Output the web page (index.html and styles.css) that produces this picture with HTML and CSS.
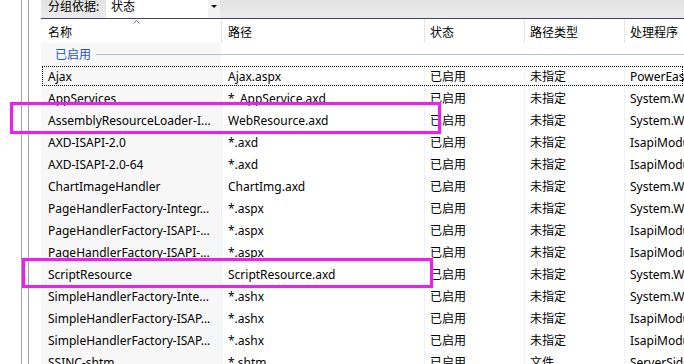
FILE: index.html
```html
<!DOCTYPE html>
<html lang="zh-CN">
<head>
    <meta charset="UTF-8">
    <title>处理程序映射</title>
    <link rel="stylesheet" href="styles.css">
</head>
<body>
    <div class="page">
        <div class="gutter">
            <div class="gutter-line"></div>
            <div class="gutter-line"></div>
        </div>

        <div class="panel">
            <!-- 分组工具栏 -->
            <div class="toolbar">
                <span class="toolbar-label">分组依据:</span>
                <div class="combo">
                    <span class="combo-text">状态</span>
                    <span class="combo-btn"><span class="combo-arrow"></span></span>
                </div>
            </div>

            <!-- 列表头 -->
            <div class="row head">
                <div class="cell name">
                    <svg class="sort" width="7" height="4" viewBox="0 0 7 4"><path d="M0.5 3.5 L3.5 0.5 L6.5 3.5" fill="none" stroke="#7a7a7a" stroke-width="1"/></svg>
                    <span>名称</span>
                </div>
                <div class="cell">路径</div>
                <div class="cell">状态</div>
                <div class="cell">路径类型</div>
                <div class="cell">处理程序</div>
            </div>

            <!-- 分组 -->
            <div class="row group">
                <div class="group-title">已启用</div>
                <div class="group-line"></div>
            </div>

            <div class="rows">
                <div class="row item focused">
                    <div class="cell name">Ajax</div>
                    <div class="cell">Ajax.aspx</div>
                    <div class="cell">已启用</div>
                    <div class="cell">未指定</div>
                    <div class="cell">PowerEasy.Framework</div>
                </div>
                <div class="row item">
                    <div class="cell name">AppServices</div>
                    <div class="cell">*_AppService.axd</div>
                    <div class="cell">已启用</div>
                    <div class="cell">未指定</div>
                    <div class="cell">System.Web</div>
                </div>
                <div class="row item">
                    <div class="cell name">AssemblyResourceLoader-I...</div>
                    <div class="cell">WebResource.axd</div>
                    <div class="cell">已启用</div>
                    <div class="cell">未指定</div>
                    <div class="cell">System.Web</div>
                </div>
                <div class="row item">
                    <div class="cell name">AXD-ISAPI-2.0</div>
                    <div class="cell">*.axd</div>
                    <div class="cell">已启用</div>
                    <div class="cell">未指定</div>
                    <div class="cell">IsapiModule</div>
                </div>
                <div class="row item">
                    <div class="cell name">AXD-ISAPI-2.0-64</div>
                    <div class="cell">*.axd</div>
                    <div class="cell">已启用</div>
                    <div class="cell">未指定</div>
                    <div class="cell">IsapiModule</div>
                </div>
                <div class="row item">
                    <div class="cell name">ChartImageHandler</div>
                    <div class="cell">ChartImg.axd</div>
                    <div class="cell">已启用</div>
                    <div class="cell">未指定</div>
                    <div class="cell">System.Web</div>
                </div>
                <div class="row item">
                    <div class="cell name">PageHandlerFactory-Integr...</div>
                    <div class="cell">*.aspx</div>
                    <div class="cell">已启用</div>
                    <div class="cell">未指定</div>
                    <div class="cell">System.Web</div>
                </div>
                <div class="row item">
                    <div class="cell name">PageHandlerFactory-ISAPI-...</div>
                    <div class="cell">*.aspx</div>
                    <div class="cell">已启用</div>
                    <div class="cell">未指定</div>
                    <div class="cell">IsapiModule</div>
                </div>
                <div class="row item">
                    <div class="cell name">PageHandlerFactory-ISAPI-...</div>
                    <div class="cell">*.aspx</div>
                    <div class="cell">已启用</div>
                    <div class="cell">未指定</div>
                    <div class="cell">IsapiModule</div>
                </div>
                <div class="row item">
                    <div class="cell name">ScriptResource</div>
                    <div class="cell">ScriptResource.axd</div>
                    <div class="cell">已启用</div>
                    <div class="cell">未指定</div>
                    <div class="cell">System.Web</div>
                </div>
                <div class="row item">
                    <div class="cell name">SimpleHandlerFactory-Inte...</div>
                    <div class="cell">*.ashx</div>
                    <div class="cell">已启用</div>
                    <div class="cell">未指定</div>
                    <div class="cell">System.Web</div>
                </div>
                <div class="row item">
                    <div class="cell name">SimpleHandlerFactory-ISAP...</div>
                    <div class="cell">*.ashx</div>
                    <div class="cell">已启用</div>
                    <div class="cell">未指定</div>
                    <div class="cell">IsapiModule</div>
                </div>
                <div class="row item">
                    <div class="cell name">SimpleHandlerFactory-ISAP...</div>
                    <div class="cell">*.ashx</div>
                    <div class="cell">已启用</div>
                    <div class="cell">未指定</div>
                    <div class="cell">IsapiModule</div>
                </div>
                <div class="row item">
                    <div class="cell name">SSINC-shtm</div>
                    <div class="cell">*.shtm</div>
                    <div class="cell">已启用</div>
                    <div class="cell">文件</div>
                    <div class="cell">ServerSideIncludeModule</div>
                </div>
            </div>
        </div>

        <!-- 标注框 -->
        <div class="mark mark-1"></div>
        <div class="mark mark-2"></div>
    </div>
</body>
</html>
```

FILE: styles.css
```css
body {
    margin: 0;
    background: #fff;
    font-family: "Noto Sans", "Noto Sans CJK SC", sans-serif;
    font-size: 12px;
    color: #000;
}

.page {
    position: relative;
    display: flex;
    width: 684px;
    height: 364px;
    overflow: hidden;
}

.gutter {
    width: 41px;
    flex-shrink: 0;
    display: flex;
    padding-left: 21px;
    gap: 6px;
    box-sizing: border-box;
}

.gutter-line {
    width: 1px;
    background: #a3a3a3;
}

.panel {
    flex: 1;
    min-width: 0;
    display: flex;
    flex-direction: column;
}

.toolbar {
    height: 18px;
    display: flex;
    align-items: center;
    background: linear-gradient(#e2e2e2, #ebebeb);
    border-bottom: 1px solid #45456a;
    flex-shrink: 0;
}

.toolbar-label {
    padding-left: 7px;
    width: 65px;
    flex-shrink: 0;
    white-space: nowrap;
    box-sizing: border-box;
    line-height: 14px;
    margin-top: -4px;
}

.combo {
    width: 114px;
    height: 18px;
    background: #fff;
    display: flex;
    align-items: center;
    justify-content: space-between;
}

.combo-text {
    padding-left: 5px;
    line-height: 14px;
    margin-top: -4px;
}

.combo-btn {
    width: 12px;
    height: 18px;
    background: #f2f2f2;
    display: flex;
    justify-content: center;
    padding-top: 5px;
    box-sizing: border-box;
}

.combo-arrow {
    width: 0;
    height: 0;
    border-left: 3px solid transparent;
    border-right: 3px solid transparent;
    border-top: 3px solid #000;
}

.row {
    display: grid;
    grid-template-columns: 180px 203px 100px 100px 1fr;
    height: 22px;
    flex-shrink: 0;
}

.cell {
    display: flex;
    align-items: center;
    border-left: 1px solid #edf2fa;
    padding-left: 6px;
    white-space: nowrap;
    overflow: hidden;
}

.cell:nth-child(3),
.cell:nth-child(4),
.cell:nth-child(5) {
    padding-left: 5px;
}

.cell.name {
    border-left: none;
    padding-left: 7px;
    background: #f7f7f7;
}

.row.head {
    height: 24px;
}

.head .cell {
    border-left-color: #e6e6e6;
    align-items: flex-start;
    padding-top: 4px;
    box-sizing: border-box;
}

.head .cell.name {
    background: #fff;
    flex-direction: column;
    align-items: stretch;
    padding-top: 1px;
}

.sort {
    align-self: center;
    margin-left: 4px;
    margin-bottom: -1px;
    flex-shrink: 0;
}

.row.group {
    display: flex;
    align-items: center;
    background: linear-gradient(90deg, #f7f7f7 180px, #fff 180px);
}

.group-title {
    color: #2452c8;
    padding-left: 14px;
    padding-right: 5px;
}

.group-line {
    flex: 1;
    height: 1px;
    background: #b3c0dc;
}

.rows {
    display: flex;
    flex-direction: column;
}

.item.focused {
    outline: 1px dotted #000;
    outline-offset: -2px;
}

.mark {
    position: absolute;
    border: 3px solid #f31af3;
    box-sizing: border-box;
}

.mark-1 {
    left: 10px;
    top: 102px;
    width: 431px;
    height: 32px;
}

.mark-2 {
    left: 22px;
    top: 258px;
    width: 411px;
    height: 30px;
}
```
